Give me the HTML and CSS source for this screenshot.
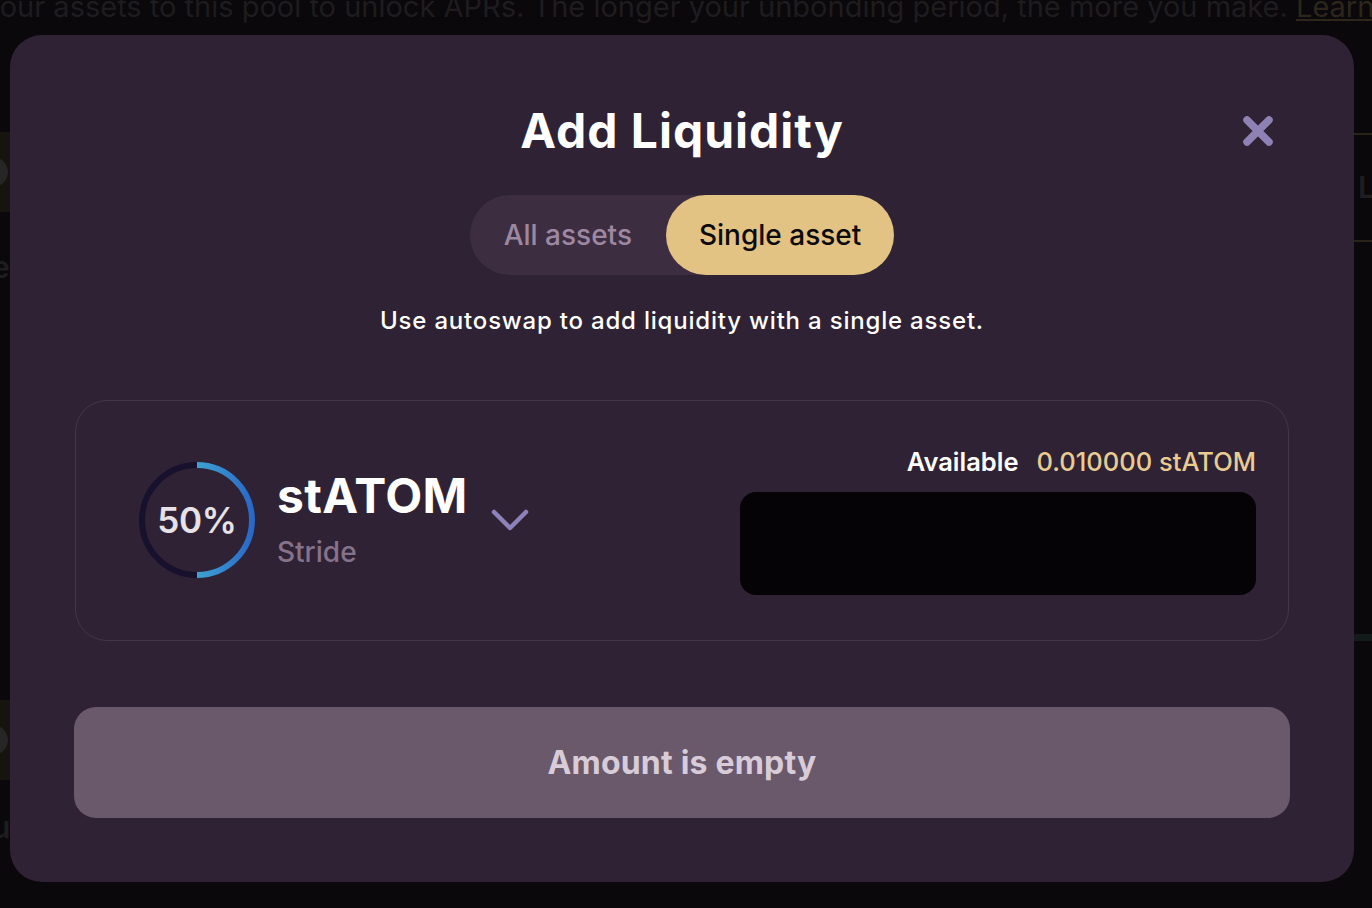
FILE: index.html
```html
<!DOCTYPE html>
<html lang="en">
<head>
<meta charset="utf-8">
<title>Add Liquidity</title>
<link rel="stylesheet" href="styles.css">
</head>
<body>
<div class="page">
  <p class="bg-line">your assets to this pool to unlock APRs. The longer your unbonding period, the more you make. <span class="bg-link">Learn more</span></p>
  <div class="bg-cols">
    <div class="bg-left">
      <div class="bg-btn one"><span class="bg-dot"></span></div>
      <div class="bg-letter">e</div>
      <div class="bg-btn two"><span class="bg-dot"></span></div>
      <div class="bg-letter">u</div>
    </div>
    <div class="bg-right">
      <div class="bg-rule"></div>
      <div class="bg-L">L</div>
      <div class="bg-rule"></div>
      <div class="bg-teal"></div>
    </div>
  </div>
</div>

<div class="overlay">
  <div class="modal">
    <div class="modal-head">
      <h1 class="title">Add Liquidity</h1>
      <button class="close" aria-label="Close">
        <svg width="30" height="30" viewBox="0 0 30 30"><path d="M4 4 L26 26 M26 4 L4 26" stroke="#8e81b3" stroke-width="7.5" stroke-linecap="round" fill="none"/></svg>
      </button>
    </div>

    <div class="toggle">
      <span class="tab">All assets</span>
      <span class="tab active">Single asset</span>
    </div>

    <p class="hint">Use autoswap to add liquidity with a single asset.</p>

    <div class="card">
      <div class="asset">
        <div class="ring">
          <svg width="118" height="118" viewBox="0 0 118 118">
            <defs>
              <linearGradient id="arc" x1="59" y1="0" x2="116" y2="0" gradientUnits="userSpaceOnUse">
                <stop offset="0" stop-color="#3ea3d2"/>
                <stop offset="1" stop-color="#2a66c6"/>
              </linearGradient>
            </defs>
            <circle cx="59" cy="59" r="55" fill="none" stroke="#17112d" stroke-width="6"/>
            <path d="M59 4 A55 55 0 0 1 59 114" fill="none" stroke="url(#arc)" stroke-width="6"/>
          </svg>
          <span class="pct">50%</span>
        </div>
        <div class="asset-name">
          <span class="sym">stATOM</span>
          <span class="chain">Stride</span>
        </div>
        <svg class="chev" width="40" height="28" viewBox="0 0 40 28"><path d="M3 5 L19 21 L35 5" stroke="#8e82bb" stroke-width="4.5" stroke-linecap="round" stroke-linejoin="round" fill="none"/></svg>
      </div>
      <div class="amount">
        <div class="avail"><span class="avail-label">Available</span><span class="avail-val">0.010000 stATOM</span></div>
        <div class="input"></div>
      </div>
    </div>

    <button class="submit">Amount is empty</button>
  </div>
</div>
</body>
</html>
```

FILE: styles.css
```css
* { box-sizing: border-box; }
html, body { margin: 0; padding: 0; }
body {
  width: 1372px;
  height: 908px;
  overflow: hidden;
  background: #0a080b;
  font-family: Inter, "Noto Sans", sans-serif;
  position: relative;
}

/* background page (dimmed) */
.page { height: 908px; width: 1372px; overflow: hidden; display: flex; flex-direction: column; }
.bg-line {
  margin: -13px 0 0 -16px;
  white-space: nowrap;
  font-size: 29px;
  line-height: 40px;
  color: #1e1c1f;
}
.bg-link { color: #2c261b; text-decoration: underline; }
.bg-cols { display: flex; justify-content: space-between; flex: 1; }
.bg-left { width: 10px; display: flex; flex-direction: column; padding-top: 105px; }
.bg-btn { height: 80px; background: #17130f; display: flex; align-items: center; }
.bg-dot { width: 30px; height: 30px; margin-left: -22px; border-radius: 50%; background: #262626; }
.bg-letter { color: #1e1d1f; font-size: 30px; font-weight: 600; margin-left: -8px; line-height: 30px; }
.bg-left .bg-letter:nth-child(2) { margin-top: 40px; margin-bottom: 418px; }
.bg-left .bg-letter:nth-child(4) { margin-top: 32px; }
.bg-right { width: 18px; display: flex; flex-direction: column; padding-top: 106px; }
.bg-rule { height: 2px; background: #2a2318; }
.bg-L { color: #1f1e20; font-size: 30px; font-weight: 600; line-height: 105px; padding-left: 4px; }
.bg-teal { height: 7px; background: #131b1a; margin-top: 392px; }

/* overlay & modal */
.overlay {
  position: absolute;
  inset: 0;
  padding: 35px 18px 26px 10px;
  display: flex;
}
.modal {
  flex: 1;
  background: #2f2234;
  border-radius: 32px;
  padding: 0 64px 64px 64px;
  display: flex;
  flex-direction: column;
}
.modal-head {
  height: 132px;
  display: flex;
  align-items: center;
  justify-content: center;
  position: relative;
  padding-top: 60px;
}
.title {
  margin: 0;
  font-family: Inter, sans-serif;
  font-weight: 700;
  font-size: 48px;
  letter-spacing: 1px;
  color: #ffffff;
  line-height: 60px;
}
.close {
  position: absolute;
  right: 17px;
  top: 81px;
  width: 30px;
  height: 30px;
  padding: 0;
  border: 0;
  background: none;
  display: flex;
}

.toggle {
  align-self: center;
  margin-top: 28px;
  display: flex;
  height: 80px;
  border-radius: 40px;
  background: #3d2d41;
}
.tab {
  display: flex;
  align-items: center;
  padding: 0 34px 0 34px;
  font-size: 28px;
  font-weight: 500;
  color: #9d88a2;
  border-radius: 40px;
}
.tab.active { background: #e2c383; color: #0c0a0a; padding: 0 33px; }

.hint {
  margin: 32px 0 0;
  text-align: center;
  font-size: 24px;
  font-weight: 500;
  letter-spacing: 0.8px;
  color: #ffffff;
  line-height: 28px;
}

.card {
  margin: 65px 1px 0 1px;
  height: 242px;
  border: 1.5px solid #443649;
  border-radius: 32px;
  display: flex;
  align-items: center;
  justify-content: space-between;
  padding: 0 32px 0 62px;
}
.asset { display: flex; align-items: center; }
.ring { width: 118px; height: 118px; position: relative; display: flex; align-items: center; justify-content: center; }
.ring svg { position: absolute; left: 0; top: 0; }
.pct { font-size: 35px; font-weight: 600; color: #e6e2e7; letter-spacing: -0.3px; position: relative; }
.asset-name { display: flex; flex-direction: column; margin-left: 21px; }
.sym { font-size: 48px; font-weight: 700; color: #fff; line-height: 56px; letter-spacing: 0.4px; }
.chain { font-size: 28px; font-weight: 500; color: #85728b; line-height: 40px; margin-top: 8px; }
.chev { margin-left: 23px; margin-top: 2px; }

.amount { display: flex; flex-direction: column; align-items: flex-end; width: 516px; padding-top: 0; }
.avail { display: flex; gap: 18px; font-size: 25.5px; font-weight: 600; line-height: 32px; }
.avail-label { color: #ffffff; }
.avail-val { color: #e8cc92; font-weight: 500; }
.input { margin-top: 14px; width: 516px; height: 103px; background: #050305; border-radius: 16px; }

.submit {
  margin-top: 66px;
  height: 111px;
  border: 0;
  border-radius: 22px;
  background: #6a586b;
  color: #d8ccd9;
  font-family: Inter, sans-serif;
  font-size: 32px;
  font-weight: 700;
  letter-spacing: 0.2px;
}
```
